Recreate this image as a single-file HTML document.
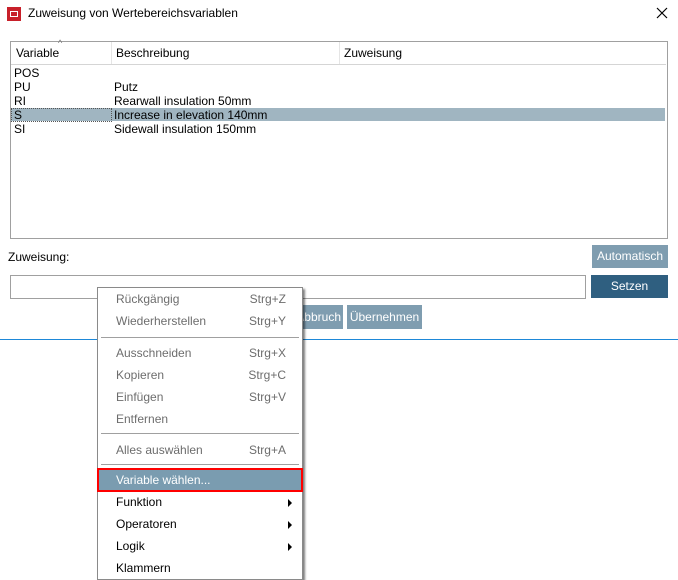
<!DOCTYPE html>
<html><head><meta charset="utf-8"><style>
body{margin:0;width:678px;height:580px;background:#fff;font-family:"Liberation Sans",sans-serif;font-size:12px;color:#000;position:relative;overflow:hidden}
.a{position:absolute}
.btn{position:absolute;color:#fff;background:#7f9db0;text-align:center;font-size:12px}
.mi{position:absolute;left:18px;height:22px;line-height:22px;width:170px}
.mi .k{position:absolute;right:0;top:0}
.dis{color:#6d6d6d}
.sep{position:absolute;left:3px;right:3px;height:1px;background:#a0a0a0}
.arr{position:absolute;right:-6px;top:8px;width:0;height:0;border-left:4px solid #000;border-top:4px solid transparent;border-bottom:4px solid transparent}
</style></head><body>
<div class="a" style="left:7px;top:7px;width:14px;height:14px;background:#c8202a"><div class="a" style="left:3px;top:4px;width:8px;height:6px;border:1px solid #fff;box-sizing:border-box"></div></div>
<div class="a" style="left:28px;top:6px;font-size:12px">Zuweisung von Wertebereichsvariablen</div>
<svg class="a" style="left:656px;top:7px" width="12" height="12"><path d="M1 1L11 11M11 1L1 11" stroke="#000" stroke-width="1.2"/></svg>

<div class="a" style="left:10px;top:41px;width:656px;height:196px;border:1px solid #a0a0a0"></div>
<div class="a" style="left:11px;top:42px;width:655px;height:22px;border-bottom:1px solid #d5d5d5"></div>
<div class="a" style="left:111px;top:42px;width:1px;height:22px;background:#e5e5e5"></div>
<div class="a" style="left:339px;top:42px;width:1px;height:22px;background:#e5e5e5"></div>
<div class="a" style="left:16px;top:46px">Variable</div>
<div class="a" style="left:58px;top:38px;font-size:9px;color:#777">^</div>
<div class="a" style="left:116px;top:46px">Beschreibung</div>
<div class="a" style="left:344px;top:46px">Zuweisung</div>
<div class="a" style="left:11px;top:108px;width:654px;height:13px;background:#a0b5c1"></div>
<div class="a" style="left:11px;top:108px;width:99px;height:12px;border:1px dotted #555"></div>
<div class="a" style="left:14px;top:66px;line-height:14px">POS<br>PU<br>RI<br>S<br>SI</div>
<div class="a" style="left:114px;top:80px;line-height:14px">Putz<br>Rearwall insulation 50mm<br>Increase in elevation 140mm<br>Sidewall insulation 150mm</div>

<div class="a" style="left:8px;top:250px">Zuweisung:</div>
<div class="btn" style="left:592px;top:245px;width:76px;height:23px;line-height:23px">Automatisch</div>
<div class="a" style="left:10px;top:275px;width:574px;height:22px;border:1px solid #a0a0a0"></div>
<div class="btn" style="left:591px;top:275px;width:77px;height:23px;line-height:23px;background:#2f5f80">Setzen</div>
<div class="btn" style="left:290px;top:305px;width:51px;height:24px;line-height:24px;text-align:right;padding-right:2px">Abbruch</div>
<div class="btn" style="left:347px;top:305px;width:75px;height:24px;line-height:24px">Übernehmen</div>
<div class="a" style="left:0;top:339px;width:678px;height:1px;background:#1e88d8"></div>

<div class="a" style="left:97px;top:287px;width:204px;height:291px;background:#fff;border:1px solid #8a8a8a;box-shadow:2px 2px 2px rgba(0,0,0,.5)">
<div class="mi dis" style="top:0">Rückgängig<span class="k">Strg+Z</span></div>
<div class="mi dis" style="top:22px">Wiederherstellen<span class="k">Strg+Y</span></div>
<div class="sep" style="top:49px"></div>
<div class="mi dis" style="top:54px">Ausschneiden<span class="k">Strg+X</span></div>
<div class="mi dis" style="top:76px">Kopieren<span class="k">Strg+C</span></div>
<div class="mi dis" style="top:98px">Einfügen<span class="k">Strg+V</span></div>
<div class="mi dis" style="top:120px">Entfernen</div>
<div class="sep" style="top:145px"></div>
<div class="mi dis" style="top:151px">Alles auswählen<span class="k">Strg+A</span></div>
<div class="sep" style="top:176px"></div>
<div class="a" style="left:-1px;top:180px;width:206px;height:24px;background:#7a9cb0;border:2px solid #f00;box-sizing:border-box"></div>
<div class="mi" style="top:181px;color:#fff">Variable wählen...</div>
<div class="mi" style="top:203px">Funktion<span class="arr"></span></div>
<div class="mi" style="top:225px">Operatoren<span class="arr"></span></div>
<div class="mi" style="top:247px">Logik<span class="arr"></span></div>
<div class="mi" style="top:269px">Klammern</div>
</div>
</body></html>
